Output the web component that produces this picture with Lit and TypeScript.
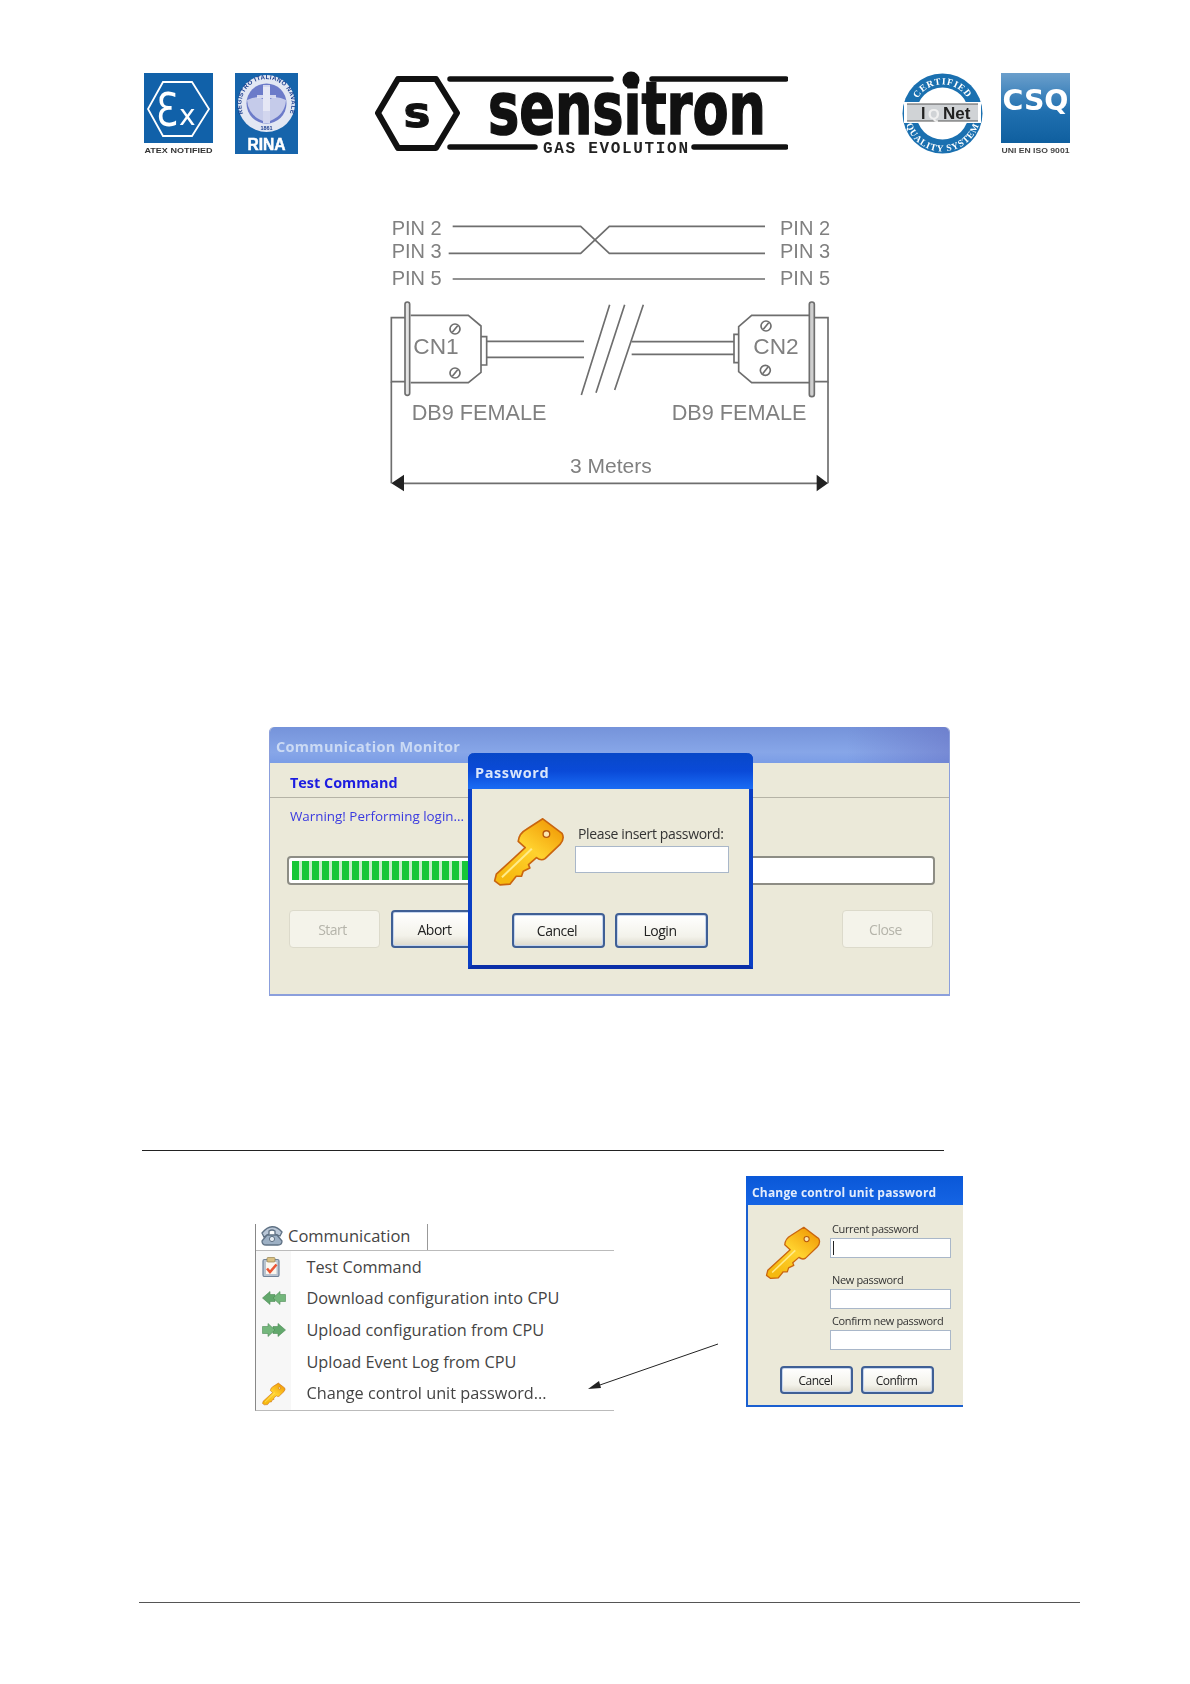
import { LitElement, html, css } from "lit";
import { customElement } from "lit/decorators.js";

const keyIcon = (id: string, cls: string) => html`<svg class=${cls} viewBox="695 303 220 210">
  <defs><linearGradient id=${id} x1="0.2" y1="0.9" x2="0.8" y2="0.1">
    <stop offset="0" stop-color="#f6b90f"/><stop offset="0.55" stop-color="#ffd22e"/><stop offset="1" stop-color="#f3a30c"/>
  </linearGradient></defs>
  <path d="M845 308 L903 352 Q912 368 897 385 L852 428 Q840 436 826 425 L802 446 L806 456 L786 466 L781 481 L765 481 L746 505 L716 507 L700 495 L705 475 L792 395 L771 376 Q773 352 795 340 Z"
    fill="url(#${id})" stroke="#c9650f" stroke-width="5" stroke-linejoin="round"/>
  <path d="M812 398 L722 484" stroke="#ffeb8a" stroke-width="6" fill="none"/>
  <circle cx="856" cy="354" r="10" fill="#fbe7b0" stroke="#b5560d" stroke-width="4"/>
</svg>`;

const exLogo = html`<svg class="logo" width="69" height="81" viewBox="0 0 69 81">
  <rect width="69" height="70" fill="#1161a9"/>
  <path d="M19 9 H48 L65 36 L48 63 H19 L4 36 Z" fill="none" stroke="#fff" stroke-width="1.8"/>
  <text x="12" y="53" class="ex-e" textLength="22" lengthAdjust="spacingAndGlyphs">Ɛ</text><text x="35" y="52" class="ex-x">x</text>
  <text x="34.5" y="79.5" text-anchor="middle" class="atex" textLength="68" lengthAdjust="spacingAndGlyphs">ATEX NOTIFIED</text>
</svg>`;

const rinaLogo = html`<svg class="logo" width="63" height="81" viewBox="0 0 63 81">
  <rect width="63" height="81" fill="#1664ab"/>
  <circle cx="31.5" cy="30.5" r="28.5" fill="#e2e7f3"/>
  <circle cx="31.5" cy="30.5" r="20" fill="#6c7bc9"/>
  <path d="M12 27 Q22 22 28 26 V14 H35 V26 Q41 22 51 27 Q50 42 35 48 V38 H28 V48 Q13 42 12 27 Z" fill="#c5cbea"/>
  <path d="M28 12 H35 V50 H28 Z M22 22 H41 V25 H22 Z" fill="#eceef8" opacity=".8"/>
  <path id="rina-arc" d="M9 42 A25 25 0 1 1 54 42" fill="none"/>
  <text class="rina-arc"><textPath href="#rina-arc" startOffset="50%" text-anchor="middle">REGISTRO ITALIANO NAVALE</textPath></text>
  <text x="31.5" y="57" text-anchor="middle" class="rina-yr">1861</text>
  <text x="31.5" y="77" text-anchor="middle" class="rina-t" textLength="38" lengthAdjust="spacingAndGlyphs">RINA</text>
</svg>`;

const sensitron = html`<svg class="logo sens-svg" width="413" height="104" viewBox="375 60 413 104">
  <path d="M398 79 H436 L457 113 L436 148 H398 L378 113 Z" fill="none" stroke="#111" stroke-width="6" stroke-linejoin="round"/>
  <text x="417" y="127" text-anchor="middle" class="s-mark" textLength="27" lengthAdjust="spacingAndGlyphs">s</text>
  <path d="M450 79 H611 M652 79 H786 M450 147 H535 M694 147 H786" stroke="#111" stroke-width="5.5" stroke-linecap="round"/>
  <text x="488" y="134" class="s-word" textLength="278" lengthAdjust="spacingAndGlyphs">sensitron</text>
  <circle cx="631" cy="80" r="8.5" fill="#111"/>
  <rect x="622" y="88.5" width="18" height="3.5" fill="#fff"/>
  <text x="543" y="152.5" class="s-sub" textLength="145" lengthAdjust="spacing">GAS EVOLUTION</text>
</svg>`;

const iqnet = html`<svg class="logo" width="81" height="81" viewBox="0 0 81 81">
  <circle cx="40.5" cy="40.5" r="40" fill="#1a70b0"/>
  <circle cx="40.5" cy="40.5" r="26" fill="#fff"/>
  <rect x="2" y="29" width="77" height="21" fill="#fff"/>
  <rect x="5" y="31" width="71" height="17" fill="#d0d3d6"/>
  <path d="M5 31 H76 M5 48 H76" stroke="#555" stroke-width="1"/>
  <path id="iq-top" d="M13.3 50.4 A29 29 0 1 1 67.7 50.4" fill="none"/>
  <path id="iq-bot" d="M4.8 27.5 A38 38 0 1 0 76.2 27.5" fill="none"/>
  <text class="iq-arc"><textPath href="#iq-top" startOffset="50%" text-anchor="middle">CERTIFIED</textPath></text>
  <text class="iq-arc"><textPath href="#iq-bot" startOffset="50%" text-anchor="middle">QUALITY SYSTEM</textPath></text>
  <text x="19" y="46" class="iq-i">I</text><text x="26" y="46" class="iq-q">Q</text><text x="41" y="46" class="iq-n">Net</text>
</svg>`;

const csq = html`<svg class="logo" width="69" height="81" viewBox="0 0 69 81">
  <defs><linearGradient id="csq-g" x1="0" y1="0" x2="0" y2="1">
    <stop offset="0" stop-color="#6b9fcc"/><stop offset="0.55" stop-color="#2070b0"/><stop offset="1" stop-color="#0f5f9f"/>
  </linearGradient></defs>
  <rect width="69" height="70" fill="url(#csq-g)"/>
  <text x="34.5" y="37" text-anchor="middle" class="csq-t" textLength="66" lengthAdjust="spacingAndGlyphs">CSQ</text>
  <text x="34.5" y="79.5" text-anchor="middle" class="csq-s" textLength="68" lengthAdjust="spacingAndGlyphs">UNI EN ISO 9001</text>
</svg>`;

const diagram = html`<svg class="diagram" width="460" height="300" viewBox="0 0 1380 900">
  <g class="lines">
    <path d="M218 79 H602 L688 160 H1155 M206 160 H602 L688 79 H1155 M218 237 H1155"/>
    <rect x="75" y="306" width="14" height="280" rx="7" fill="#e4e4e4"/>
    <path d="M75 353 H34 V545 H75 M92 346 H265 L303 378 V517 L265 548 H92"/>
    <path d="M303 410 H320 V495 H303 M320 424 H612 M320 472 H612"/>
    <path d="M689 314 L604 585 M734 314 L648 578 M790 314 L704 570"/>
    <rect x="1288" y="306" width="15" height="284" rx="7" fill="#cfcfcf"/>
    <path d="M1303 353 H1344 V545 H1303 M1288 346 H1115 L1076 380 V515 L1115 548 H1288"/>
    <path d="M1076 403 H1062 V488 H1076 M1062 425 H755 M1062 463 H755"/>
    <path d="M34 545 V850 M1344 545 V850 M60 850 H1320"/>
    <circle cx="225" cy="387" r="15"/><path d="M217 397 L233 377"/>
    <circle cx="225" cy="519" r="15"/><path d="M217 529 L233 509"/>
    <circle cx="1158" cy="378" r="15"/><path d="M1150 388 L1166 368"/>
    <circle cx="1156" cy="511" r="15"/><path d="M1148 521 L1164 501"/>
  </g>
  <path d="M34 850 L72 824 V874 Z M1344 850 L1310 824 V874 Z" fill="#222"/>
  <g class="dtext">
    <text x="35" y="105">PIN 2</text><text x="35" y="175">PIN 3</text><text x="35" y="254">PIN 5</text>
    <text x="1200" y="105">PIN 2</text><text x="1200" y="175">PIN 3</text><text x="1200" y="254">PIN 5</text>
    <text x="100" y="462" font-size="68">CN1</text><text x="1120" y="462" font-size="68">CN2</text>
    <text x="95" y="660" font-size="65">DB9 FEMALE</text><text x="875" y="660" font-size="65">DB9 FEMALE</text>
    <text x="570" y="818" font-size="63">3 Meters</text>
  </g>
</svg>`;

const commIcon = html`<svg class="mi" width="24" height="24" viewBox="0 0 24 24">
  <path d="M2 10 Q12 -2 22 9 L20 13 L15 11 L15 8 Q12 6 9 8 L9 11 L4 14 Z" fill="#b9c6d6" stroke="#5f7184" stroke-width="1.3"/>
  <path d="M7 12 H17 L22 18 Q22 22 18 22 H6 Q2 22 2 18 Z" fill="#9db0c4" stroke="#5f7184" stroke-width="1.3"/>
  <circle cx="12" cy="16" r="2.6" fill="#e7edf3" stroke="#5f7184"/>
</svg>`;
const clipIcon = html`<svg class="mi" width="18" height="20" viewBox="0 0 18 20">
  <rect x="1" y="2.5" width="16" height="17" rx="1.5" fill="#b9c4d0" stroke="#71849a" stroke-width="1.2"/>
  <rect x="4" y="5" width="10.5" height="12" fill="#fbf7ef"/>
  <rect x="5" y="0.5" width="8" height="4.5" rx="1" fill="#d9c184" stroke="#97834f" stroke-width=".7"/>
  <path d="M5 11.5 L8 15 L14.5 7.5" fill="none" stroke="#ea5636" stroke-width="2.6"/>
</svg>`;
const arrowsIcon = (left: boolean) => html`<svg class="mi" width="24" height="14" viewBox="0 0 24 14">
  <g transform=${left ? "" : "translate(24 0) scale(-1 1)"} fill="#62a86c" stroke="#4d8c56" stroke-width=".6">
    <path d="M0.5 7 L8 0.5 V3.5 H13 V10.5 H8 V13.5 Z"/>
    <path d="M11 7 L18 0.5 V3.5 H23.5 V10.5 H18 V13.5 Z" fill="#74b77c"/>
  </g>
</svg>`;

const menuRows = [
  { icon: clipIcon, label: "Test Command" },
  { icon: arrowsIcon(true), label: "Download configuration into CPU" },
  { icon: arrowsIcon(false), label: "Upload configuration from CPU" },
  { icon: null, label: "Upload Event Log from CPU" },
  { icon: keyIcon("k3", "key-xs"), label: "Change control unit password..." },
];

@customElement("app-root")
export class AppRoot extends LitElement {
  static styles = css`
    :host { display: block; width: 1190px; height: 1684px; background: #fff; overflow: hidden; font-family: "Liberation Sans", Arial, sans-serif; }
    .page { display: flex; flex-direction: column; }
    svg { display: block; flex: none; }

    .brand { display: flex; align-items: flex-start; margin: 73px 0 0 144px; height: 81px; filter: blur(0.45px); }
    .brand .rina { margin-left: 22px; }
    .brand .sens { margin: -13px 0 0 77px; }
    .brand .iq { margin-left: 114px; }
    .brand .cs { margin-left: 18px; }
    .ex-e { font: 400 47px "DejaVu Sans", sans-serif; fill: #fff; }
    .ex-x { font: 400 28px "DejaVu Sans", sans-serif; fill: #fff; }
    .atex { font: 700 8px "Liberation Sans", sans-serif; fill: #333; }
    .rina-arc { font: 700 6.2px "Liberation Sans", sans-serif; fill: #1c3f8f; letter-spacing: .35px; }
    .rina-yr { font: 700 5.5px "Liberation Sans", sans-serif; fill: #1c3f8f; }
    .rina-t { font: 700 16px "Liberation Sans", sans-serif; fill: #fff; stroke: #fff; stroke-width: .5px; }
    .s-mark { font: 700 42px "DejaVu Sans", sans-serif; fill: #111; stroke: #111; stroke-width: 1px; }
    .s-word { font: 700 73px "DejaVu Sans", sans-serif; fill: #111; stroke: #111; stroke-width: 1.6px; }
    .s-sub { font: 700 16px "Liberation Mono", monospace; fill: #222; }
    .iq-arc { font: 700 9.4px "Liberation Serif", serif; fill: #fff; letter-spacing: .9px; }
    .iq-i { font: 700 16px "Liberation Sans", sans-serif; fill: #222; }
    .iq-q { font: 700 15px "Liberation Sans", sans-serif; fill: #f0f0f0; }
    .iq-n { font: 700 17px "Liberation Sans", sans-serif; fill: #222; }
    .csq-t { font: 700 29px "DejaVu Sans", sans-serif; fill: #fff; }
    .csq-s { font: 700 7.5px "Liberation Sans", sans-serif; fill: #444; }

    .diagram { margin: 46px 0 0 380px; filter: blur(0.5px); }
    .lines { fill: none; stroke: #6e6e6e; stroke-width: 5; }
    .dtext { font-family: "Liberation Sans", sans-serif; font-size: 60px; fill: #808080; }

    .win-area { position: relative; margin: 227px 0 0 269px; width: 681px; height: 269px; filter: blur(0.4px); }
    .monitor { display: flex; flex-direction: column; height: 100%; box-sizing: border-box; background: #ebe9d9; border: solid #8b9fdc; border-width: 0 1px 2px 1px; border-radius: 5px 5px 0 0; }
    .m-title { height: 36px; flex: none; box-sizing: border-box; padding: 10px 0 0 6px; background: linear-gradient(90deg, transparent 85%, rgba(100,105,190,.45)), linear-gradient(180deg, #7593da, #87a6e8 70%, #7b9de6); font: 700 14.5px "Open Sans", sans-serif; line-height: 20px; color: #cbdaf4; border-radius: 5px 5px 0 0; letter-spacing: .3px; }
    .m-head { height: 35px; flex: none; box-sizing: border-box; padding: 10px 0 0 20px; border-bottom: 1px solid #b5b3a6; font: 700 14.4px "Open Sans", sans-serif; line-height: 20px; color: #1c1ce0; }
    .m-warn { margin: 9px 0 0 20px; font: 400 13.4px "Open Sans", sans-serif; line-height: 19px; color: #3a3ae0; }
    .m-prog { margin: 30px 14px 0 17px; height: 29px; box-sizing: border-box; padding: 3px; background: #fff; border: 2px solid #8d8d85; border-radius: 4px; }
    .m-fill { width: 330px; height: 19px; background: repeating-linear-gradient(90deg, #17c737 0 7px, #c4eec8 7px 10px); }
    .m-btns { display: flex; margin: 25px 16px 0 19px; gap: 11px; }
    .m-btns .close { margin-left: auto; }
    .btn { box-sizing: border-box; width: 91px; height: 38px; display: flex; align-items: center; justify-content: center; font: 400 14px "Open Sans", sans-serif; color: #222; border: 2px solid #3f5f95; border-radius: 4px; background: linear-gradient(180deg, #fff, #f3f2ea 70%, #dcd9cc); box-shadow: inset 0 0 0 1px #c6d6ef; letter-spacing: -.5px; }
    .m-btns .btn { padding-right: 4px; }
    .btn.off { border: 1px solid #dcdacb; background: #f4f3ea; color: #b5b4aa; box-shadow: none; }

    .pw { position: absolute; left: 199px; top: 26px; width: 285px; height: 216px; box-sizing: border-box; display: flex; flex-direction: column; background: #ebe9d9; border: solid #0a3ec4; border-width: 0 4px 4px 4px; border-radius: 6px 6px 0 0; border-bottom-color: #0a2fa8; }
    .pw-title { height: 36px; flex: none; margin: 0 -4px; box-sizing: border-box; padding: 10px 0 0 7px; background: linear-gradient(180deg, #0848c8, #0a4ad8 50%, #1a6cf4); font: 700 14.5px "Open Sans", sans-serif; line-height: 20px; color: #d9e6fb; border-radius: 6px 6px 0 0; letter-spacing: .6px; }
    .pw-body { display: flex; padding: 28px 0 0 21px; }
    .key-lg { width: 73px; height: 70px; }
    .pw-form { display: flex; flex-direction: column; margin-left: 9px; padding-top: 7px; }
    .pw-form label { margin-left: 3px; font: 400 14px "Open Sans", sans-serif; line-height: 19px; color: #333; letter-spacing: -.35px; white-space: nowrap; }
    .field { box-sizing: border-box; background: #fff; border: 1px solid #a9b7c9; }
    .pw-form .field { width: 154px; height: 27px; margin-top: 3px; }
    .pw-btns { display: flex; gap: 10px; margin: 26px 0 0 40px; }
    .pw-btns .btn { width: 93px; height: 35px; padding-right: 3px; }

    .rule { margin: 154px 0 0 142px; width: 802px; height: 0; border-top: 1.5px solid #222; }

    .lower { position: relative; display: flex; align-items: flex-start; margin: 25px 0 0 255px; height: 231px; filter: blur(0.3px); }
    .menu { margin-top: 48px; width: 359px; height: 187px; box-sizing: border-box; display: flex; flex-direction: column; border-left: 1.5px solid #888; border-bottom: 1.5px solid #bbb; background: linear-gradient(90deg, #f7f7f7 0 35px, #fff 35px); }
    .tabrow { display: flex; height: 26px; flex: none; border-bottom: 1px solid #bbb; background: #fff; }
    .tab { display: flex; align-items: center; gap: 4px; width: 172px; height: 22px; box-sizing: border-box; padding-left: 4px; font: 400 16.5px "Open Sans", sans-serif; color: #444; white-space: nowrap; }
    .tabend { height: 26px; margin-bottom: -1px; border-right: 1.5px solid #999; padding-bottom: 4px; }
    .rows { display: flex; flex-direction: column; }
    .row { display: flex; align-items: center; height: 31.6px; font: 400 16.3px "Open Sans", sans-serif; color: #444; white-space: nowrap; }
    .ic { width: 50.5px; flex: none; display: flex; justify-content: flex-start; padding-left: 6px; box-sizing: border-box; }
    .key-xs { width: 24px; height: 24px; margin-top: 2px; }

    .cc { margin-left: 132px; width: 217px; height: 231px; box-sizing: border-box; display: flex; flex-direction: column; background: #ebe9d9; border: solid #1a5fd0; border-width: 0 0 2px 2px; border-radius: 3px 0 0 0; }
    .cc-title { height: 29px; flex: none; margin-left: -2px; box-sizing: border-box; padding: 7px 0 0 6px; background: linear-gradient(180deg, #0a58d8, #1564e4); font: 700 12px "Open Sans", sans-serif; line-height: 20px; color: #e2ecfc; letter-spacing: .18px; white-space: nowrap; }
    .cc-body { display: flex; }
    .key-md { width: 57px; height: 54px; margin: 21px 0 0 17px; }
    .cc-form { display: flex; flex-direction: column; margin-left: 8px; padding-top: 16px; }
    .cc-form label { margin-left: 2px; font: 400 11px "Open Sans", sans-serif; line-height: 16px; color: #333; letter-spacing: -.35px; white-space: nowrap; }
    .cc-form .field { width: 121px; height: 20px; margin-top: 1px; }
    .cc-form .gap1 { margin-top: 14px; }
    .cc-form .gap2 { margin-top: 4px; }
    .caret { width: 1px; height: 14px; margin: 2px 0 0 2px; background: #222; }
    .cc-btns { display: flex; gap: 8px; margin: 16px 0 0 32px; }
    .cc-btns .btn { width: 73px; height: 28px; font-size: 12px; padding-right: 2px; }

    .arrow { position: absolute; left: 332px; top: 166px; }

    .footer { margin: 195px 0 0 139px; width: 941px; height: 0; border-top: 1px solid #555; }
  `;

  render() {
    return html`<div class="page">
      <header class="brand">
        ${exLogo}
        <div class="rina">${rinaLogo}</div>
        <div class="sens">${sensitron}</div>
        <div class="iq">${iqnet}</div>
        <div class="cs">${csq}</div>
      </header>

      ${diagram}

      <section class="win-area">
        <div class="monitor">
          <div class="m-title">Communication Monitor</div>
          <div class="m-head">Test Command</div>
          <div class="m-warn">Warning! Performing login...</div>
          <div class="m-prog"><div class="m-fill"></div></div>
          <div class="m-btns">
            <div class="btn off">Start</div>
            <div class="btn">Abort</div>
            <div class="btn off close">Close</div>
          </div>
        </div>
        <div class="pw">
          <div class="pw-title">Password</div>
          <div class="pw-body">
            ${keyIcon("k1", "key-lg")}
            <div class="pw-form">
              <label>Please insert password:</label>
              <div class="field"></div>
            </div>
          </div>
          <div class="pw-btns">
            <div class="btn">Cancel</div>
            <div class="btn">Login</div>
          </div>
        </div>
      </section>

      <div class="rule"></div>

      <section class="lower">
        <div class="menu">
          <div class="tabrow"><div class="tab tabend">${commIcon}Communication</div></div>
          <div class="rows">
            ${menuRows.map((r) => html`<div class="row"><span class="ic">${r.icon}</span>${r.label}</div>`)}
          </div>
        </div>
        <div class="cc">
          <div class="cc-title">Change control unit password</div>
          <div class="cc-body">
            ${keyIcon("k2", "key-md")}
            <div class="cc-form">
              <label>Current password</label>
              <div class="field"><div class="caret"></div></div>
              <label class="gap1">New password</label>
              <div class="field"></div>
              <label class="gap2">Confirm new password</label>
              <div class="field"></div>
            </div>
          </div>
          <div class="cc-btns">
            <div class="btn">Cancel</div>
            <div class="btn">Confirm</div>
          </div>
        </div>
        <svg class="arrow" width="134" height="52" viewBox="0 0 134 52">
          <path d="M131 2 L10 44" stroke="#222" stroke-width="1" fill="none"/>
          <path d="M1 47 L12 39 L14 46 Z" fill="#222"/>
        </svg>
      </section>

      <div class="footer"></div>
    </div>`;
  }
}
